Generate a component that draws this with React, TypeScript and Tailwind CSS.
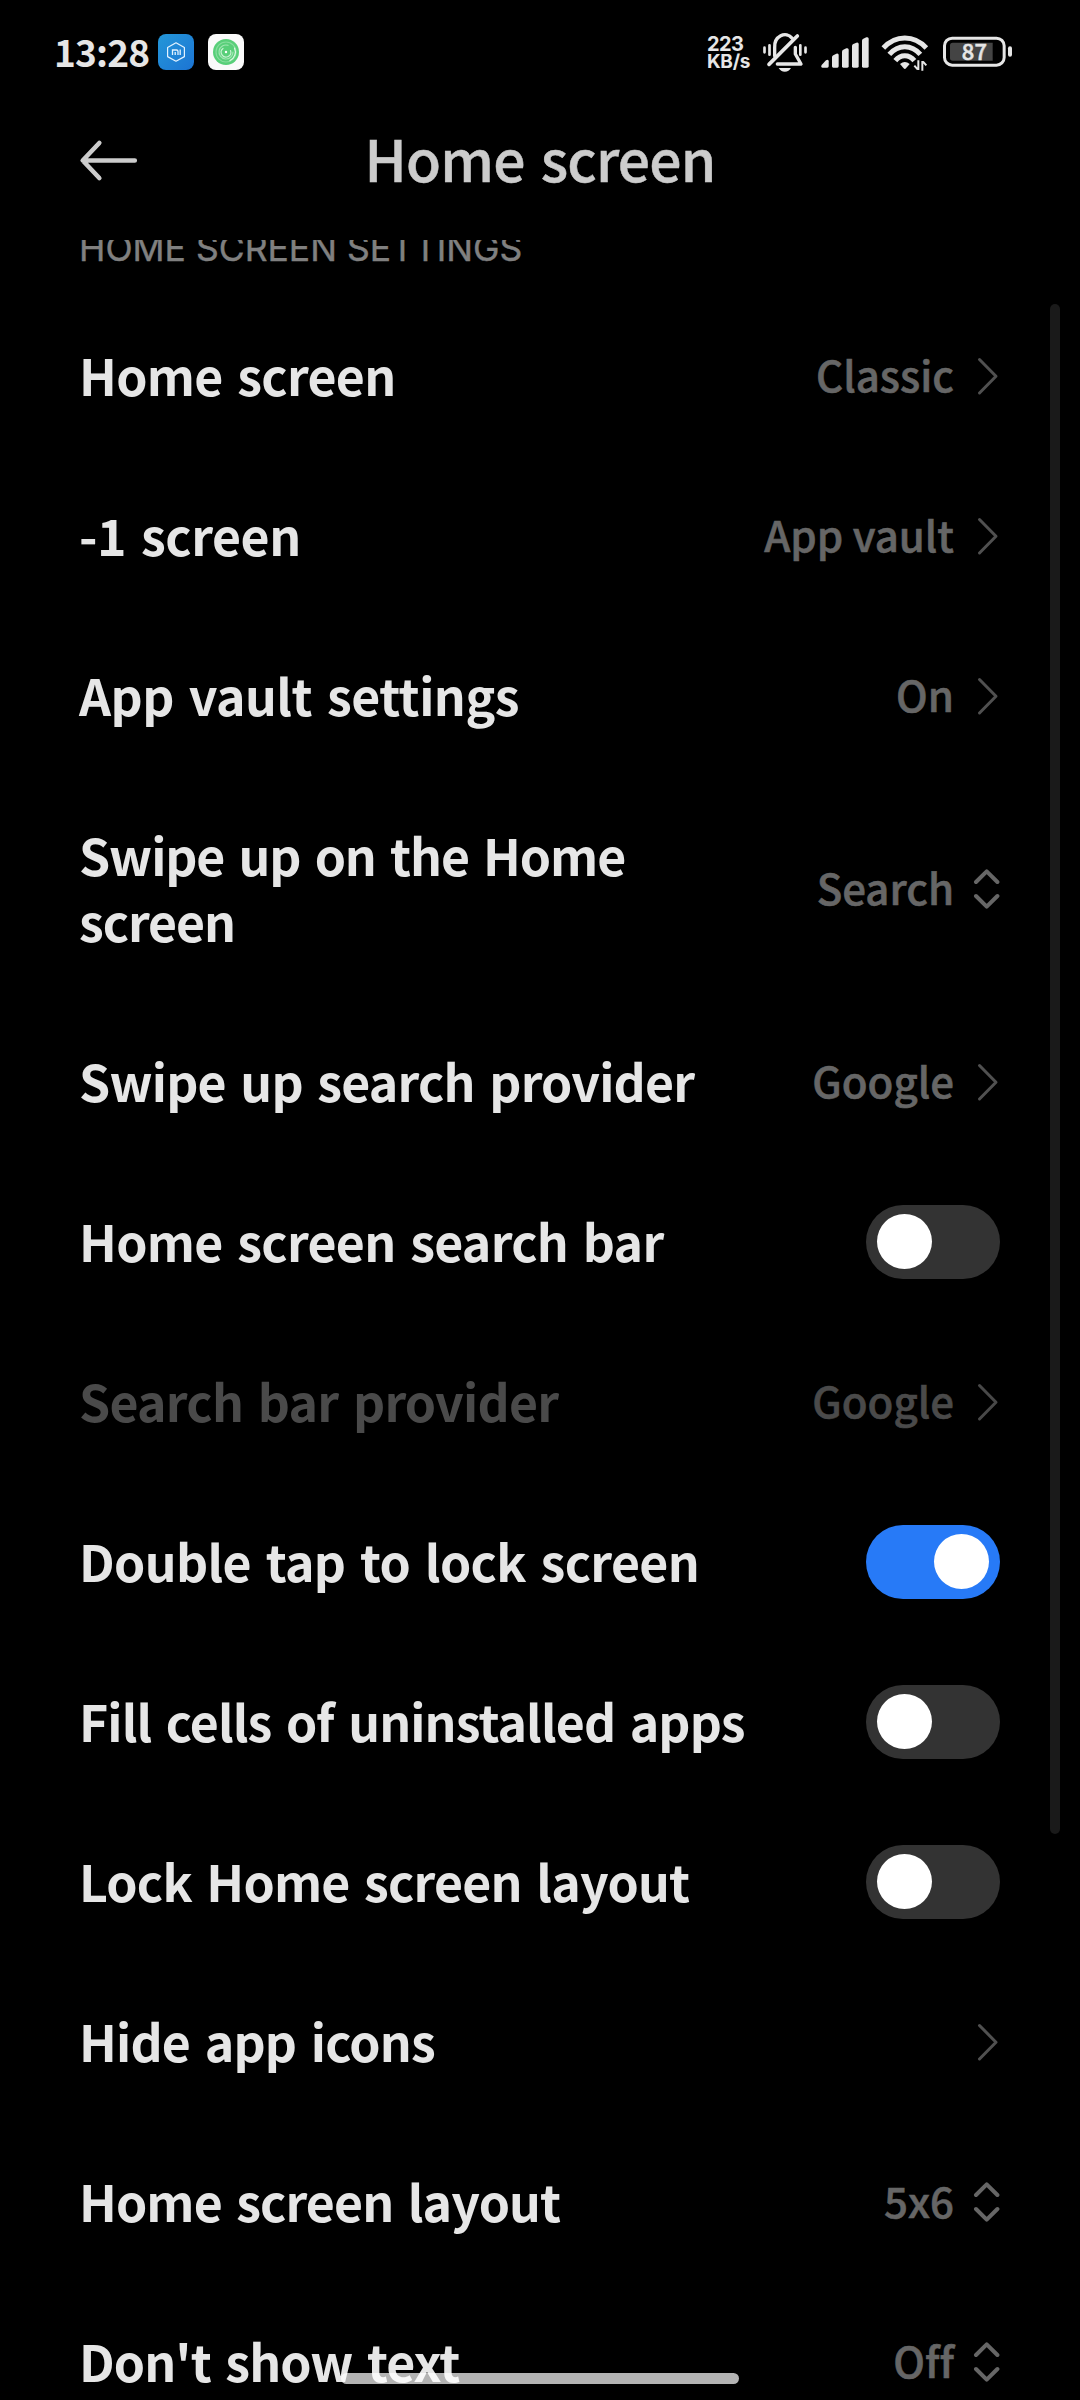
import React from "react";

type Row = {
  title: string;
  kind: "link" | "picker" | "toggle";
  value?: string;
  on?: boolean;
  disabled?: boolean;
  tracking: string;
};

const rows: Row[] = [
  { title: "Home screen", kind: "link", value: "Classic", tracking: "tracking-[-0.7px]" },
  { title: "-1 screen", kind: "link", value: "App vault", tracking: "tracking-[-0.45px]" },
  { title: "App vault settings", kind: "link", value: "On", tracking: "tracking-[-0.5px]" },
  { title: "Swipe up on the Home screen", kind: "picker", value: "Search", tracking: "tracking-[-1.1px]" },
  { title: "Swipe up search provider", kind: "link", value: "Google", tracking: "tracking-[-0.8px]" },
  { title: "Home screen search bar", kind: "toggle", tracking: "tracking-[-0.7px]" },
  { title: "Search bar provider", kind: "link", value: "Google", disabled: true, tracking: "tracking-[-0.75px]" },
  { title: "Double tap to lock screen", kind: "toggle", on: true, tracking: "tracking-[-0.65px]" },
  { title: "Fill cells of uninstalled apps", kind: "toggle", tracking: "tracking-[-0.9px]" },
  { title: "Lock Home screen layout", kind: "toggle", tracking: "tracking-[-0.8px]" },
  { title: "Hide app icons", kind: "link", tracking: "tracking-[-0.8px]" },
  { title: "Home screen layout", kind: "picker", value: "5x6", tracking: "tracking-[-0.9px]" },
  { title: "Don't show text", kind: "picker", value: "Off", tracking: "tracking-[-0.9px]" },
];

function StatusBar() {
  return (
    <div className="flex h-[104px] items-center pl-[54px] pr-[67px] text-[#e6e6e6]">
      <span className="w-[104px] -translate-y-px whitespace-nowrap text-[37px] font-bold leading-none tracking-[-0.8px]">13:28</span>
      <svg width="36" height="36" viewBox="0 0 36 36" className="shrink-0">
        <defs>
          <linearGradient id="blue" x1="0" y1="0" x2="1" y2="1">
            <stop offset="0" stopColor="#2497d8" />
            <stop offset="1" stopColor="#1c74d4" />
          </linearGradient>
        </defs>
        <rect width="36" height="36" rx="8" fill="url(#blue)" />
        <path d="M18 8.8 26.4 13.6V22.6L18 27.2 9.6 22.6V13.6Z" fill="none" stroke="#e4f3ff" strokeWidth="1.2" strokeLinejoin="round" />
        <path d="M14.5 21V16H18.6Q20 16 20 17.4V21M17.2 18V21M22.2 15.6V21" fill="none" stroke="#e4f3ff" strokeWidth="1.3" />
      </svg>
      <svg width="36" height="36" viewBox="0 0 36 36" className="ml-[14px] shrink-0">
        <rect width="36" height="36" rx="8" fill="#fafafa" />
        <circle cx="18" cy="18" r="13" fill="#58cf79" />
        <g fill="none" strokeLinecap="round" strokeWidth="1.2">
          <circle cx="18" cy="18" r="10" stroke="#86dd9d" />
          <path d="M25 18A7 7 0 1 1 20 11.3" stroke="#a0e6b2" />
          <path d="M26.500 14A9.500 9.500 0 0 1 22 26.500" stroke="#dff8e6" />
          <path d="M22.5 16.5A4.8 4.8 0 1 1 15 14.5" stroke="#c8f2d3" />
        </g>
        <circle cx="18" cy="18" r="1.2" fill="#fff" />
      </svg>
      <div className="ml-auto flex w-[53px] translate-y-[0.5px] flex-col whitespace-nowrap font-['Inter',sans-serif] text-[20px] font-bold leading-[18px]">
        <div className="tracking-[-0.6px]">223</div>
        <div className="text-[19px] tracking-[-0.3px]">KB/s</div>
      </div>
      <svg width="50" height="40" viewBox="210 36 150 120" className="shrink-0" fill="none" stroke="#e6e6e6" strokeLinecap="round">
        <path d="M254 108V83A31 36 0 0 1 307 55" strokeWidth="10" />
        <path d="M316 82V102L333 132H262" strokeWidth="10" strokeLinejoin="round" />
        <path d="M322 48 237 133" strokeWidth="11" />
        <path d="M266 144H303Q297 155 284.500 155T266 144Z" fill="#e6e6e6" stroke="none" />
        <path d="M223.500 83V97M238.500 76V104M331 76V104M346.500 83V97" strokeWidth="8" />
      </svg>
      <svg width="50" height="33.33" viewBox="390 46 150 100" className="ml-[10px] shrink-0" fill="#e6e6e6">
        <path d="M395 136 408 122Q416 117 416 125V140Q416 144 412 144H398Q391 143 395 136Z" />
        <path d="M426 113Q426 109 430 107L439 102Q446 100 446 106V140Q446 144 442 144H430Q426 144 426 140Z" />
        <path d="M456 96Q456 92 460 90L469 86Q476 84 476 90V140Q476 144 472 144H460Q456 144 456 140Z" />
        <path d="M486 79Q486 75 490 73L499 69Q506 67 506 73V140Q506 144 502 144H490Q486 144 486 140Z" />
        <path d="M516 63Q516 59 520 57L529 53Q536 51 536 57V140Q536 144 532 144H520Q516 144 516 140Z" />
      </svg>
      <svg width="50" height="40" viewBox="60 36 150 120" className="ml-[10px] shrink-0">
        <g fill="none" stroke="#e6e6e6" strokeWidth="15">
          <path d="M70 84Q98 54 134.500 54T199 84" />
          <path d="M88 103Q108 80 134.500 80T181 103" />
          <path d="M106 122Q118 107 134.500 107T163 122" />
        </g>
        <path d="M120 132Q134.500 120 149 132L138 145Q134.500 149 131 145Z" fill="#e6e6e6" />
        <path d="M175 121V150M173 148 163 137M187 152V123M189 125 199 136" fill="none" stroke="#e6e6e6" strokeWidth="6" />
      </svg>
      <svg width="71" height="33.33" viewBox="246 46 213 100" className="ml-[12px] shrink-0">
        <rect x="253.500" y="55.500" width="179" height="81" rx="23" fill="none" stroke="#e6e6e6" strokeWidth="9" />
        <path d="M278 69H398V123H278Q270 123 270 115V77Q270 69 278 69Z" fill="#444" />
        <rect x="444" y="80" width="12" height="31" rx="6" fill="#e6e6e6" />
        <text x="343" y="121" textAnchor="middle" fill="#e6e6e6" stroke="#e6e6e6" strokeWidth="1.5" fontSize="66" fontWeight="500" textLength="76">87</text>
      </svg>
    </div>
  );
}

function Header() {
  return (
    <header className="grid h-[112px] grid-cols-[80px_1fr_80px] items-center px-[78px]">
      <svg width="62" height="44" viewBox="0 0 62 44" fill="none" stroke="#ccc" strokeWidth="4.600" strokeLinecap="round" strokeLinejoin="round">
        <path d="M21.300 5 4.700 22.500 21.300 40M5 22.500H56.800" />
      </svg>
      <h1 className="-translate-y-[3px] whitespace-nowrap text-center text-[57px] font-medium leading-none tracking-[-0.8px] text-[#ccc] [-webkit-text-stroke:0.5px_#ccc] [word-spacing:4px]">
        Home screen
      </h1>
    </header>
  );
}

function Chevron({ disabled }: { disabled?: boolean }) {
  return (
    <svg width="24" height="40" viewBox="0 0 24 40" className={disabled ? "text-[#484848]" : "text-[#505050]"} fill="none" stroke="currentColor" strokeWidth="3" strokeLinecap="round" strokeLinejoin="round">
      <path d="M3.500 3.500 20 20.200 3.500 37" />
    </svg>
  );
}

function UpDown() {
  return (
    <svg width="28" height="42" viewBox="0 0 28 42" fill="none" stroke="#666" strokeWidth="4" strokeLinecap="round" strokeLinejoin="round">
      <path d="M4 14 14.700 3.300 25.400 14M4 28 14.700 38.700 25.400 28" />
    </svg>
  );
}

function Toggle({ on }: { on?: boolean }) {
  return (
    <div className={`flex h-[74px] w-[134px] items-center rounded-full px-[11px] pb-px ${on ? "justify-end bg-[#277af7]" : "bg-[#333]"}`}>
      <div className="size-[55px] rounded-full bg-white" />
    </div>
  );
}

function SettingRow({ row }: { row: Row }) {
  return (
    <li className="flex min-h-[160px] items-center justify-between py-[47px] pl-[79px] pr-[80px]">
      <div className={`max-w-[640px] shrink-0 -translate-y-[2px] text-[50px] font-bold leading-[66px] [word-spacing:4px] ${row.tracking} ${row.disabled ? "text-[#4a4a4a]" : "text-[#e6e6e6]"} ${row.kind === "toggle" ? "whitespace-nowrap" : ""}`}>
        {row.title}
      </div>
      {row.kind === "toggle" ? (
        <div className="-my-1">
          <Toggle on={row.on} />
        </div>
      ) : (
        <div className="flex items-center">
          {row.value && (
            <span className={`-translate-y-[2px] whitespace-nowrap text-[42px] font-medium leading-[56px] [font-variant-ligatures:none] ${row.disabled ? "text-[#4a4a4a] [-webkit-text-stroke:0.6px_#4a4a4a]" : "text-[#666] [-webkit-text-stroke:0.6px_#666]"}`}>
              {row.value}
            </span>
          )}
          <div className="flex w-[46px] justify-end">{row.kind === "link" ? <Chevron disabled={row.disabled} /> : <UpDown />}</div>
        </div>
      )}
    </li>
  );
}

export default function App() {
  return (
    <div className="relative flex h-[2400px] w-[1080px] flex-col overflow-hidden bg-black font-['Noto_Sans_CJK_SC',sans-serif]">
      <StatusBar />
      <Header />
      <main className="mt-[24px] min-h-0 flex-1 overflow-hidden">
        <div className="h-[56px] pl-[79px]">
          <h2 className="-translate-y-[11px] whitespace-nowrap font-['Inter',sans-serif] text-[35.5px] leading-[40px] text-[#808080] [-webkit-text-stroke:0.4px_#808080]">
            HOME SCREEN SETTINGS
          </h2>
        </div>
        <ul>
          {rows.map((row) => (
            <SettingRow key={row.title} row={row} />
          ))}
        </ul>
      </main>
      <div className="absolute right-[20px] top-[304px] h-[1530px] w-[10px] rounded-full bg-[#1a1a1a]" />
      <div className="absolute bottom-[16px] left-[341px] h-[11px] w-[398px] rounded-full bg-white/70" />
    </div>
  );
}
